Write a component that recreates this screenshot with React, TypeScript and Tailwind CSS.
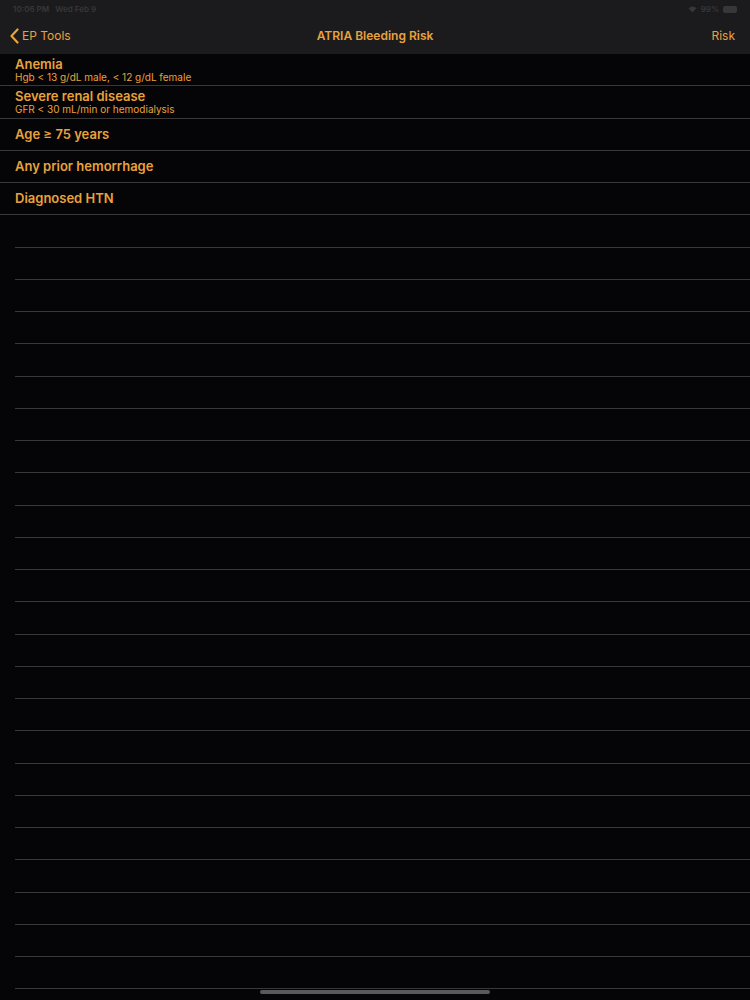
import React from "react";

type Item = { title: string; detail?: string };

const items: Item[] = [
  { title: "Anemia", detail: "Hgb < 13 g/dL male, < 12 g/dL female" },
  { title: "Severe renal disease", detail: "GFR < 30 mL/min or hemodialysis" },
  { title: "Age ≥ 75 years" },
  { title: "Any prior hemorrhage" },
  { title: "Diagnosed HTN" },
];

const EMPTY_ROWS = 24;

function Chevron() {
  return (
    <svg width="11" height="16" viewBox="0 0 11 16" className="shrink-0">
      <path
        d="M8.5 1.5 L2.5 8 L8.5 14.5"
        fill="none"
        stroke="#e9a23b"
        strokeWidth="2.2"
        strokeLinecap="round"
        strokeLinejoin="round"
      />
    </svg>
  );
}

function StatusBar() {
  return (
    <div className="flex h-[18px] items-center justify-between px-[13px] text-[8px] font-semibold text-[#37373a]">
      <span>10:06 PM&nbsp;&nbsp;&nbsp;Wed Feb 9</span>
      <div className="flex items-center gap-[4px]">
        <svg width="9" height="7" viewBox="0 0 9 7">
          <path d="M0.5 2.2 Q4.5 -1 8.5 2.2 L4.5 6.5 Z" fill="#37373a" />
        </svg>
        <span>99%</span>
        <div className="h-[7px] w-[14px] rounded-[2px] bg-[#37373a]" />
      </div>
    </div>
  );
}

function NavBar() {
  return (
    <div className="relative flex h-[36px] items-center justify-between px-[9px] text-[12px] text-[#e9a23b]">
      <div className="flex items-center gap-[2px]">
        <Chevron />
        <span>EP Tools</span>
      </div>
      <span className="absolute left-1/2 -translate-x-1/2 font-semibold">ATRIA Bleeding Risk</span>
      <span className="pr-[6px]">Risk</span>
    </div>
  );
}

export default function App() {
  return (
    <div
      className="relative h-[1000px] w-[750px] overflow-hidden bg-[#050507]"
      style={{ fontFamily: "Inter, 'Noto Sans', 'Liberation Sans', sans-serif" }}
    >
      <header className="h-[54px] bg-[#1b1b1d]">
        <StatusBar />
        <NavBar />
      </header>

      <ul>
        {items.map((it) => (
          <li
            key={it.title}
            className="box-border flex h-[32.25px] flex-col justify-center border-b border-[#38383a] px-[15px] text-[#e9a23b]"
          >
            <span className="text-[13px] font-semibold leading-[15px]">{it.title}</span>
            {it.detail && <span className="text-[10px] leading-[11px]">{it.detail}</span>}
          </li>
        ))}
        {Array.from({ length: EMPTY_ROWS }).map((_, i) => (
          <li key={i} className="box-border h-[32.25px] pl-[15px]">
            <div className="h-full border-b border-[#38383a]" />
          </li>
        ))}
      </ul>

      <div className="absolute bottom-[6px] left-[260px] h-[4px] w-[230px] rounded-full bg-[#5a5a5c]" />
    </div>
  );
}
